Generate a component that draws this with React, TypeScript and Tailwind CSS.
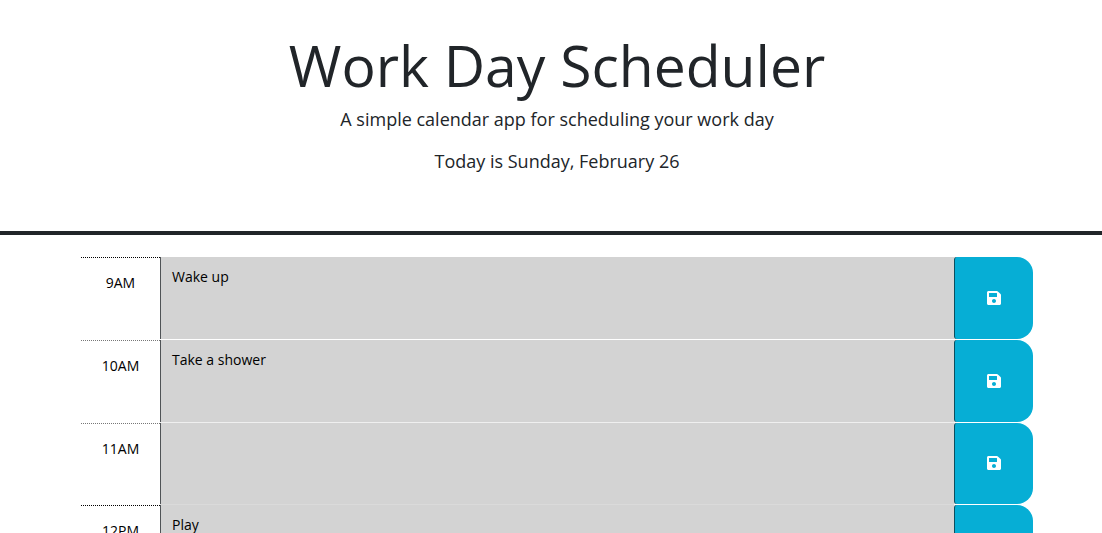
import { useState } from "react";
import { FaSave } from "react-icons/fa";

const initial = [
  { hour: "9AM", text: "Wake up", line: "border-black", gap: "border-white" },
  { hour: "10AM", text: "Take a shower", line: "border-[#777777]", gap: "border-[#efefef]" },
  { hour: "11AM", text: "", line: "border-[#777777]", gap: "border-[#dadada]" },
  { hour: "12PM", text: "Play", line: "border-black", gap: "border-white" },
];

export default function App() {
  const [rows, setRows] = useState(initial);
  return (
    <div className="min-h-screen bg-white font-['Open_Sans',sans-serif] text-[#212529]">
      <header className="flex flex-col items-center border-b-4 border-[#212529] pt-8 pb-[54px] pl-3 text-center">
        <h1 className="text-[57px] leading-[66px]">Work Day Scheduler</h1>
        <p className="mt-[5px] text-lg leading-8">A simple calendar app for scheduling your work day</p>
        <p className="mt-[10px] text-lg leading-8">Today is Sunday, February 26</p>
      </header>
      <main className="mt-[22px] grid h-[331px] grid-rows-4 pr-[69px] pl-[81px]">
        {rows.map((row, i) => (
          <form key={row.hour} className="flex" onSubmit={(e) => e.preventDefault()}>
            <label
              htmlFor={row.hour}
              className={`w-[79px] border-t border-dotted pt-[15px] text-center text-sm leading-5 text-black ${row.line}`}
            >
              {row.hour}
            </label>
            <div className={`flex min-w-0 flex-1 border-b ${row.gap}`}>
              <textarea
                id={row.hour}
                value={row.text}
                onChange={(e) => setRows(rows.map((r, n) => (n === i ? { ...r, text: e.target.value } : r)))}
                className="min-w-0 flex-1 resize-none border-l border-[#4f5356] bg-[#d3d3d3] px-[11px] pt-2 text-sm leading-6 text-black outline-none"
              />
            </div>
            <div className="mb-px flex w-[79px] bg-linear-to-r from-[#d3d3d3] from-[3px] to-white to-[3px]">
              <button
                type="submit"
                aria-label={`Save ${row.hour}`}
                className="flex flex-1 items-center justify-center rounded-l-[3px] rounded-r-2xl border-l border-[#0b4f5f] bg-[#06aed5] text-white"
              >
                <FaSave className="size-4" />
              </button>
            </div>
          </form>
        ))}
      </main>
    </div>
  );
}
